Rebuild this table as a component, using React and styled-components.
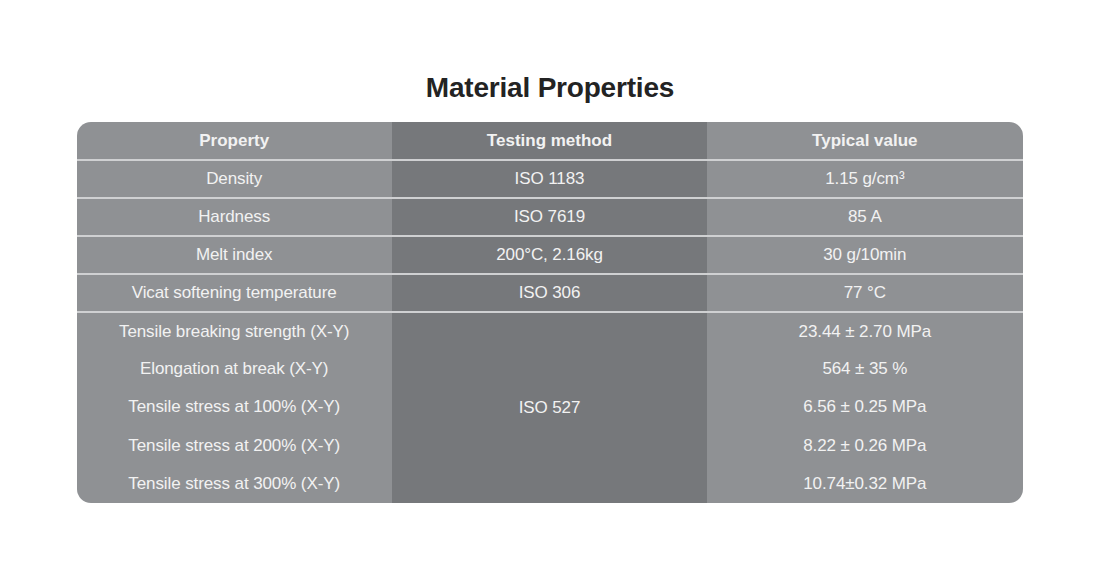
import React from "react";
import styled, { createGlobalStyle } from "styled-components";

const GlobalStyle = createGlobalStyle`
  body {
    margin: 0;
    background: #ffffff;
    font-family: "Liberation Sans", Arial, sans-serif;
  }
`;

const rows = [
  { property: "Density", method: "ISO 1183", value: "1.15 g/cm³" },
  { property: "Hardness", method: "ISO 7619", value: "85 A" },
  { property: "Melt index", method: "200°C, 2.16kg", value: "30 g/10min" },
  { property: "Vicat softening temperature", method: "ISO 306", value: "77 °C" },
];

const tensile = [
  { property: "Tensile breaking strength (X-Y)", value: "23.44 ± 2.70 MPa" },
  { property: "Elongation at break (X-Y)", value: "564 ± 35 %" },
  { property: "Tensile stress at 100% (X-Y)", value: "6.56 ± 0.25 MPa" },
  { property: "Tensile stress at 200% (X-Y)", value: "8.22 ± 0.26 MPa" },
  { property: "Tensile stress at 300% (X-Y)", value: "10.74±0.32 MPa" },
];

const App = () => {
  return (
    <Page>
      <GlobalStyle />
      <Title>Material Properties</Title>
      <TableWrap>
        <Table>
          <colgroup>
            <col />
            <col />
            <col />
          </colgroup>
          <thead>
            <Row $line>
              <HeadCell>Property</HeadCell>
              <HeadCell $mid>Testing method</HeadCell>
              <HeadCell>Typical value</HeadCell>
            </Row>
          </thead>
          <tbody>
            {rows.map((r) => (
              <Row key={r.property} $line>
                <Cell>{r.property}</Cell>
                <Cell $mid>{r.method}</Cell>
                <Cell>{r.value}</Cell>
              </Row>
            ))}
            {tensile.map((r, i) => (
              <Row key={r.property} $tall>
                <Cell>{r.property}</Cell>
                {i === 0 && (
                  <Cell $mid rowSpan={tensile.length}>
                    ISO 527
                  </Cell>
                )}
                <Cell>{r.value}</Cell>
              </Row>
            ))}
          </tbody>
        </Table>
      </TableWrap>
    </Page>
  );
};

const Page = styled.div`
  width: 1100px;
  height: 579px;
  padding-top: 72px;
  box-sizing: border-box;
  display: flex;
  flex-direction: column;
  align-items: center;
`;

const Title = styled.h1`
  margin: 0 0 18px;
  font-size: 28px;
  line-height: 32px;
  font-weight: 700;
  color: #232323;
  letter-spacing: -0.2px;
`;

const TableWrap = styled.div`
  width: 946px;
  margin-left: -1px;
  border-radius: 14px;
  overflow: hidden;
`;

const Table = styled.table`
  width: 100%;
  border-collapse: collapse;
  table-layout: fixed;
  color: #f2f2f2;
  font-size: 17px;

  & col {
    width: 33.33%;
  }
`;

const Row = styled.tr`
  height: ${({ $tall }) => ($tall ? "38.2px" : "38px")};
  border-bottom: ${({ $line }) => ($line ? "2px solid #cfd0d2" : "none")};
`;

const Cell = styled.td`
  padding: 0;
  text-align: center;
  vertical-align: middle;
  background: ${({ $mid }) => ($mid ? "#76787b" : "#8f9194")};
  letter-spacing: -0.1px;
`;

const HeadCell = styled(Cell).attrs({ as: "th" })`
  font-weight: 700;
  font-size: 17px;
  letter-spacing: 0;
`;

export default App;
